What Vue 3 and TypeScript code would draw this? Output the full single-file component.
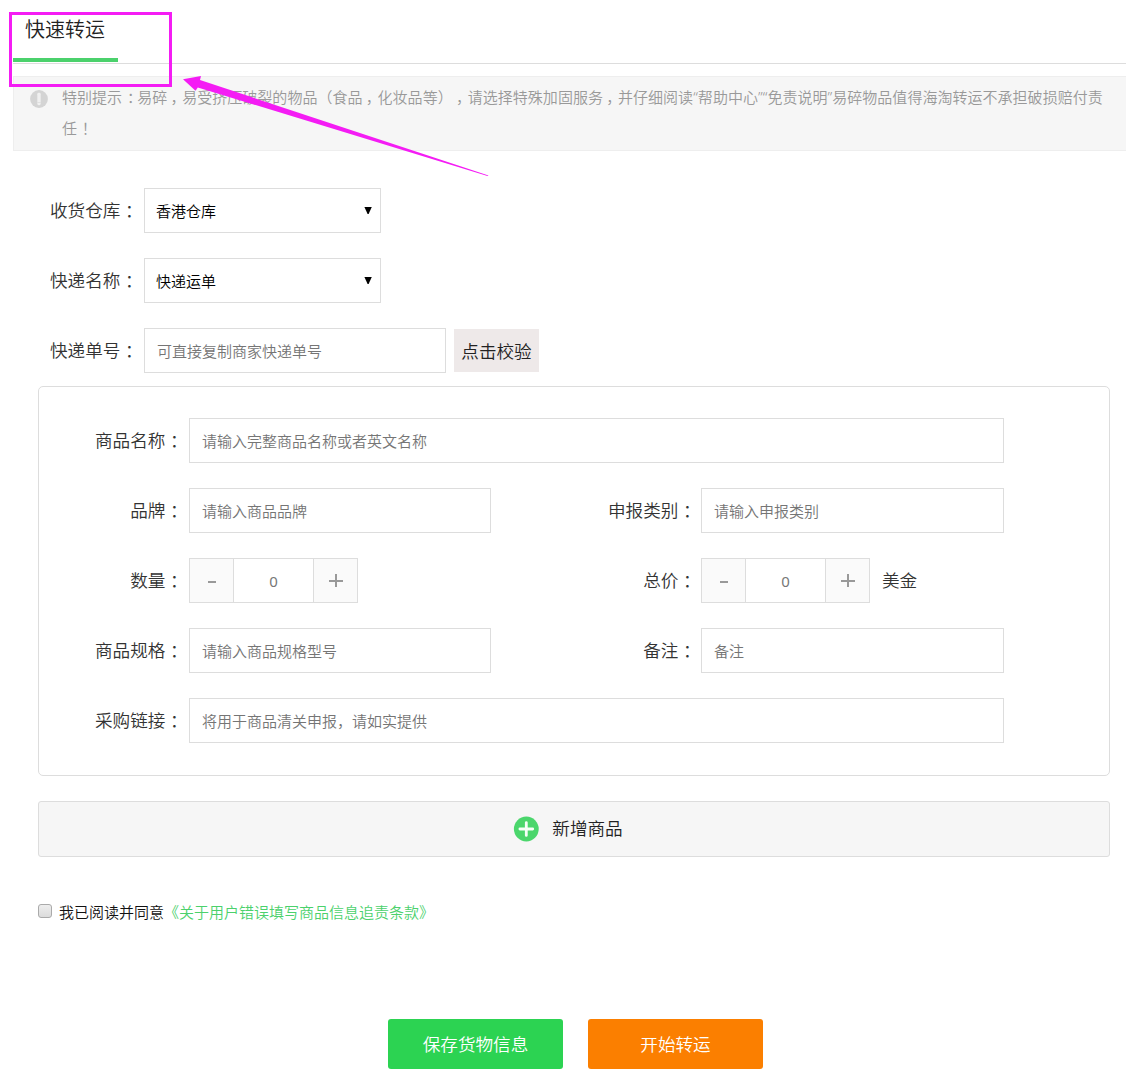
<script setup lang="ts">
import { ref } from 'vue'

const warehouse = ref('香港仓库')
const carrier = ref('快递运单')
const quantity = ref(0)
const total = ref(0)
const agreed = ref(false)

// Punctuation is set in its own spans so the marks sit centred in their cells
const noticeLines = [
  '特别提示：易碎，易受挤压破裂的物品（食品，化妆品等），请选择特殊加固服务，并仔细阅读“帮助中心”“免责说明”易碎物品值得海淘转运不承担破损赔付责',
  '任！',
].map((line) => line.split(/([：，！])/).filter(Boolean))

function isMark(part: string): boolean {
  return /^[：，！]$/.test(part)
}
</script>

<template>
  <div class="page">
    <header class="head">
      <h1 class="tab">快速转运</h1>
    </header>

    <section class="notice">
      <svg class="notice-icon" width="18" height="18" viewBox="0 0 18 18">
        <circle cx="9" cy="9" r="8.9" fill="#d4d4d4" />
        <rect x="7.3" y="2.8" width="3.4" height="12.4" rx="1.4" fill="#f0f0f0" />
        <rect x="7.3" y="12" width="3.4" height="0.8" fill="#dcdcdc" />
      </svg>
      <div class="notice-text">
        <p v-for="(line, n) in noticeLines" :key="n"><span v-for="(p, i) in line" :key="i" :class="{ mark: isMark(p), comma: p === '，' }">{{ p }}</span></p>
      </div>
    </section>

    <form class="form" @submit.prevent>
      <div class="row outer">
        <label class="label">收货仓库<span class="mark">：</span></label>
        <div class="select-wrap">
          <select v-model="warehouse" class="select"><option>香港仓库</option></select>
          <svg class="caret" width="8" height="7" viewBox="0 0 8 7"><path d="M0.4 0H7.8L4.6 7H3.6Z" /></svg>
        </div>
      </div>
      <div class="row outer">
        <label class="label">快递名称<span class="mark">：</span></label>
        <div class="select-wrap">
          <select v-model="carrier" class="select"><option>快递运单</option></select>
          <svg class="caret" width="8" height="7" viewBox="0 0 8 7"><path d="M0.4 0H7.8L4.6 7H3.6Z" /></svg>
        </div>
      </div>
      <div class="row outer">
        <label class="label">快递单号<span class="mark">：</span></label>
        <input class="input half" placeholder="可直接复制商家快递单号" />
        <button class="verify" type="button">点击校验</button>
      </div>

      <div class="panel">
        <div class="row">
          <label class="label">商品名称<span class="mark">：</span></label>
          <input class="input full" placeholder="请输入完整商品名称或者英文名称" />
        </div>
        <div class="row">
          <label class="label">品牌<span class="mark">：</span></label>
          <input class="input half" placeholder="请输入商品品牌" />
          <label class="label second">申报类别<span class="mark">：</span></label>
          <input class="input wide" placeholder="请输入申报类别" />
        </div>
        <div class="row">
          <label class="label">数量<span class="mark">：</span></label>
          <div class="stepper">
            <button type="button" @click="quantity = Math.max(0, quantity - 1)"><i class="minus"></i></button>
            <span class="count">{{ quantity }}</span>
            <button type="button" @click="quantity++"><i class="plus"></i></button>
          </div>
          <label class="label second after-stepper">总价<span class="mark">：</span></label>
          <div class="stepper">
            <button type="button" @click="total = Math.max(0, total - 1)"><i class="minus"></i></button>
            <span class="count">{{ total }}</span>
            <button type="button" @click="total++"><i class="plus"></i></button>
          </div>
          <span class="unit">美金</span>
        </div>
        <div class="row">
          <label class="label">商品规格<span class="mark">：</span></label>
          <input class="input half" placeholder="请输入商品规格型号" />
          <label class="label second">备注<span class="mark">：</span></label>
          <input class="input wide" placeholder="备注" />
        </div>
        <div class="row">
          <label class="label">采购链接<span class="mark">：</span></label>
          <input class="input full" placeholder="将用于商品清关申报，请如实提供" />
        </div>
      </div>

      <button class="add" type="button">
        <svg width="26" height="26" viewBox="0 0 26 26">
          <circle cx="13.3" cy="13" r="12.4" fill="#4bd66c" />
          <path d="M13.3 6.6V19.4M6.9 13H19.7" stroke="#f6fff8" stroke-width="2.8" stroke-linecap="round" />
        </svg>
        <span>新增商品</span>
      </button>

      <label class="agree">
        <input v-model="agreed" type="checkbox" class="check" />
        <span>我已阅读并同意</span><a class="terms">《关于用户错误填写商品信息追责条款》</a>
      </label>

      <div class="actions">
        <button class="btn save" type="button">保存货物信息</button>
        <button class="btn start" type="button">开始转运</button>
      </div>
    </form>

    <div class="highlight"></div>
    <svg class="arrow" width="310" height="106" viewBox="0 0 310 106">
      <path d="M3 7.3L21 4L20 8L308.5 103.6L307.5 104L17.8 15.4L15.5 18.8Z" fill="#f41cf4" />
    </svg>
  </div>
</template>

<style>
body {
  background: #fff;
}
</style>

<style scoped>
.page {
  position: relative;
  width: 1126px;
  height: 1080px;
  overflow: hidden;
  box-sizing: border-box;
  padding-left: 13px;
  font-family: 'Noto Sans', 'Noto Sans CJK SC', sans-serif;
  font-weight: 350;
  font-size: 15px;
  text-spacing-trim: space-all;
  color: #333;
}
.page * {
  box-sizing: border-box;
}
button,
input,
select {
  font: inherit;
  margin: 0;
  padding: 0;
  border: 0;
  border-radius: 0;
  outline: 0;
}
.mark {
  display: inline-block;
  width: 1em;
  padding-left: 0.26em;
  text-align: left;
  font-feature-settings: 'halt';
}
.notice .mark {
  padding-left: 0.32em;
}
.notice .comma {
  padding-left: 0.22em;
}
.head {
  height: 64px;
  border-bottom: 1px solid #ddd;
}
.tab {
  margin: 0;
  width: 105px;
  height: 62px;
  padding-left: 12px;
  border-bottom: 4px solid #4bd16c;
  font-size: 20px;
  font-weight: 350;
  line-height: 60px;
  color: #222;
}
.notice {
  display: flex;
  margin-top: 12px;
  height: 75px;
  background: #f6f6f6;
  border: 1px solid #eee;
  border-right: 0;
}
.notice-icon {
  flex: none;
  margin: 13px 0 0 16px;
}
.notice-text {
  margin: 5px 0 0 14px;
  color: #999;
  white-space: nowrap;
  letter-spacing: 0.03px;
}
.notice-text p {
  margin: 0;
  height: 31px;
  line-height: 31px;
}
.form {
  padding: 37px 16px 0 25px;
}
.row {
  display: flex;
  align-items: center;
  height: 45px;
  margin-bottom: 25px;
}
.row.outer:nth-of-type(3) {
  margin-bottom: 13px;
}
.label {
  flex: none;
  width: 150px;
  height: 45px;
  padding-right: 6px;
  text-align: right;
  font-size: 17.6px;
  line-height: 44px;
  white-space: nowrap;
}
.outer .label {
  width: 106px;
}
.second {
  width: 210px;
  padding-right: 5px;
}
.after-stepper {
  width: 343px;
}
.input,
.select {
  height: 45px;
  border: 1px solid #ddd;
  background: #fff;
  font-size: 15px;
}
.input {
  padding: 0 12px;
}
.input::placeholder {
  color: #757575;
}
.half {
  width: 302px;
}
.wide {
  width: 303px;
}
.full {
  width: 815px;
}
.select-wrap {
  position: relative;
}
.select {
  display: block;
  width: 237px;
  padding-left: 11px;
  appearance: none;
  color: #000;
}
.caret {
  position: absolute;
  right: 9px;
  top: 19px;
}
.verify {
  margin-left: 8px;
  width: 85px;
  height: 43px;
  background: #eee9e9;
  font-size: 17.6px;
  color: #222;
}
.panel {
  height: 390px;
  padding-top: 31px;
  border: 1px solid #ddd;
  border-radius: 5px;
}
.stepper {
  display: flex;
  width: 169px;
  height: 45px;
  border: 1px solid #ddd;
}
.stepper button {
  display: flex;
  align-items: center;
  justify-content: center;
  width: 43px;
  background: #fafafa;
}
.count {
  flex: 1;
  border: solid #ddd;
  border-width: 0 1px;
  line-height: 45px;
  text-align: center;
  font-weight: 400;
  color: #777;
}
.minus {
  width: 8px;
  height: 2px;
  margin: 3px 0 0 0;
  background: #999;
}
.plus {
  width: 14px;
  height: 14px;
  background:
    linear-gradient(#999, #999) center / 14px 2px no-repeat,
    linear-gradient(#999, #999) center / 2px 13px no-repeat;
}
.unit {
  height: 45px;
  margin-left: 12px;
  line-height: 44px;
  font-size: 17.6px;
}
.add {
  display: flex;
  align-items: center;
  justify-content: center;
  gap: 13px;
  width: 100%;
  height: 56px;
  margin-top: 25px;
  padding-right: 12px;
  border: 1px solid #ddd;
  border-radius: 3px;
  background: #f6f6f6;
  font-size: 17.6px;
  color: #222;
}
.add span {
  padding-bottom: 3px;
}
.agree {
  display: flex;
  align-items: center;
  height: 30px;
  margin-top: 39px;
  color: #111;
}
.check {
  appearance: none;
  width: 14px;
  height: 14px;
  margin: 0 7px 0 0;
  border: 1px solid #aaa;
  border-radius: 3px;
  background: linear-gradient(#eee, #dcdcdc);
}
.terms {
  color: #4bd16c;
}
.actions {
  display: flex;
  gap: 25px;
  margin: 93px 0 0 350px;
}
.btn {
  width: 175px;
  height: 50px;
  padding-bottom: 2px;
  border-radius: 3px;
  font-size: 17.6px;
  color: #fff;
}
.save {
  background: #2cd352;
}
.start {
  background: #fb7f00;
}
.highlight {
  position: absolute;
  left: 9px;
  top: 12px;
  width: 163px;
  height: 75px;
  border: 3px solid #f41cf4;
}
.arrow {
  position: absolute;
  left: 180px;
  top: 72px;
}
</style>
